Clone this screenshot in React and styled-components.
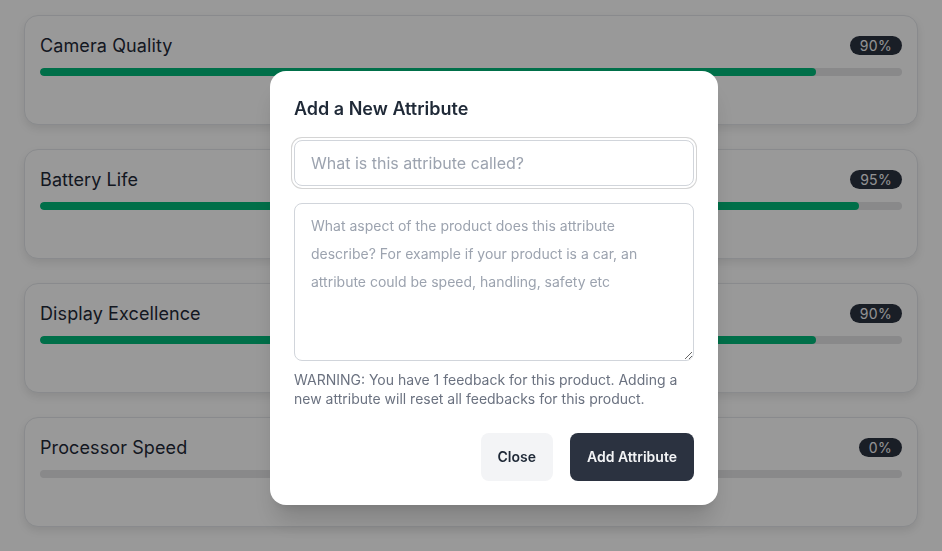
import React from "react";
import styled, { createGlobalStyle } from "styled-components";

const Global = createGlobalStyle`
  * { box-sizing: border-box; }
  html, body { margin: 0; padding: 0; background: #ffffff; }
  body { font-family: Inter, "Noto Sans", sans-serif; color: #111827; }
`;

const Page = styled.div`
  display: flex;
  flex-direction: column;
  gap: 24px;
  padding: 15px 24px 24px;
  min-height: 551px;
`;

const Card = styled.div`
  height: 110px;
  background: #fff;
  border: 1px solid #e5e7eb;
  border-radius: 14px;
  padding: 15px;
  box-shadow: 0 4px 8px rgba(0, 0, 0, 0.09);
`;

const CardHeader = styled.div`
  display: flex;
  align-items: center;
  justify-content: space-between;
  height: 28px;
`;

const CardTitle = styled.div`
  font-size: 18px;
  color: #1f2937;
  letter-spacing: 0.1px;
`;

const Badge = styled.span`
  background: #2b3240;
  color: #f3f4f6;
  font-size: 14px;
  line-height: 19px;
  padding: 0 10px;
  border-radius: 999px;
  letter-spacing: 0.3px;
`;

const Track = styled.div`
  margin-top: 9px;
  height: 8px;
  border-radius: 4px;
  background: #e4e4e6;
  overflow: hidden;
`;

const Fill = styled.div`
  height: 100%;
  border-radius: 4px;
  background: #00b97a;
`;

const Overlay = styled.div`
  position: fixed;
  inset: 0;
  background: rgba(0, 0, 0, 0.4);
  display: flex;
  align-items: center;
  justify-content: center;
  padding: 24px 0 0 46px;
`;

const Modal = styled.div`
  width: 448px;
  background: #fff;
  border-radius: 16px;
  padding: 24px;
  box-shadow: 0 20px 25px -5px rgba(0, 0, 0, 0.15), 0 8px 10px -6px rgba(0, 0, 0, 0.1);
`;

const Title = styled.h2`
  margin: 0 0 17px;
  font-size: 18px;
  line-height: 28px;
  font-weight: 600;
  color: #1f2937;
`;

const NameInput = styled.input`
  display: block;
  width: 100%;
  height: 46px;
  border: 1px solid #d1d5db;
  border-radius: 8px;
  padding: 0 16px;
  font-family: Inter, sans-serif;
  font-size: 16px;
  color: #111827;
  outline: none;
  caret-color: #111827;
  box-shadow: 0 0 0 2px #ffffff, 0 0 0 3px #d4d4d4;
  &::placeholder { color: #9ca3af; }
`;

const DescArea = styled.textarea`
  display: block;
  width: 100%;
  height: 158px;
  margin-top: 17px;
  border: 1px solid #d1d5db;
  border-radius: 8px;
  padding: 8px 16px;
  font-family: Inter, sans-serif;
  font-size: 14px;
  line-height: 28px;
  color: #111827;
  outline: none;
  resize: vertical;
  &::placeholder { color: #9ca3af; }
`;

const Warning = styled.p`
  margin: 9px 0 0;
  font-size: 14px;
  line-height: 19.5px;
  color: #6b7280;
`;

const Actions = styled.div`
  display: flex;
  justify-content: flex-end;
  gap: 17px;
  margin-top: 24px;
`;

const Button = styled.button`
  height: 48px;
  padding: 0 17px;
  border: none;
  border-radius: 8px;
  font-family: Inter, sans-serif;
  font-size: 14px;
  font-weight: 600;
  cursor: pointer;
  background: ${(p) => (p.$primary ? "#2b3240" : "#f3f4f6")};
  color: ${(p) => (p.$primary ? "#f3f4f6" : "#1f2937")};
`;

const attributes = [
  { name: "Camera Quality", value: 90 },
  { name: "Battery Life", value: 95 },
  { name: "Display Excellence", value: 90 },
  { name: "Processor Speed", value: 0 },
];

export default function App() {
  return (
    <>
      <Global />
      <Page>
        {attributes.map((a) => (
          <Card key={a.name}>
            <CardHeader>
              <CardTitle>{a.name}</CardTitle>
              <Badge>{a.value}%</Badge>
            </CardHeader>
            <Track>
              <Fill style={{ width: `${a.value}%` }} />
            </Track>
          </Card>
        ))}
      </Page>
      <Overlay>
        <Modal>
          <Title>Add a New Attribute</Title>
          <NameInput autoFocus placeholder="What is this attribute called?" />
          <DescArea placeholder="What aspect of the product does this attribute describe? For example if your product is a car, an attribute could be speed, handling, safety etc" />
          <Warning>
            WARNING: You have 1 feedback for this product. Adding a new attribute will reset all feedbacks for this product.
          </Warning>
          <Actions>
            <Button>Close</Button>
            <Button $primary>Add Attribute</Button>
          </Actions>
        </Modal>
      </Overlay>
    </>
  );
}
